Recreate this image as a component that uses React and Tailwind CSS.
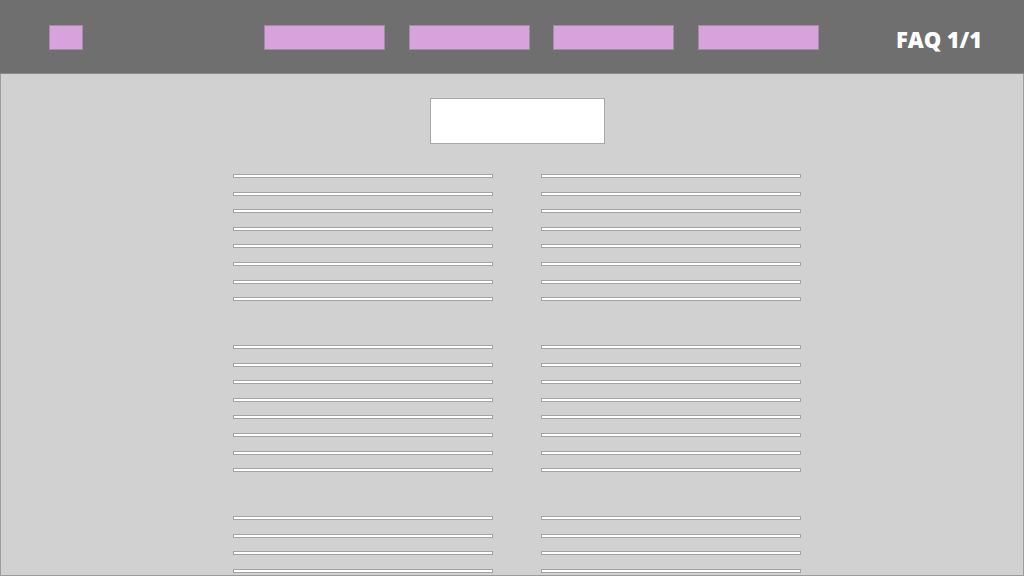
const groups = [8, 8, 4];

function Line() {
  return <div className="h-[4px] w-[260px] border border-[#a3a3a3] bg-white" />;
}

function Column({ count }) {
  return (
    <div className="flex w-[260px] flex-col gap-[13.6px]">
      {Array.from({ length: count }).map((_, i) => (
        <Line key={i} />
      ))}
    </div>
  );
}

export default function App() {
  return (
    <div className="flex h-[576px] w-[1024px] flex-col overflow-hidden bg-[#d1d1d1] font-['Open_Sans',sans-serif]">
      <header className="flex h-[74px] shrink-0 items-start border-b border-[#8a8a8a] bg-[#6f6f6f] pl-[49px] pr-[42px] pt-[25px]">
        <div className="h-[25px] w-[34px] border border-[#a58aa7] bg-[#d8a3dc]" />
        <nav className="ml-[181px] flex gap-[23.5px]">
          <div className="h-[25px] w-[121px] border border-[#a58aa7] bg-[#d8a3dc]" />
          <div className="h-[25px] w-[121px] border border-[#a58aa7] bg-[#d8a3dc]" />
          <div className="h-[25px] w-[121px] border border-[#a58aa7] bg-[#d8a3dc]" />
          <div className="h-[25px] w-[121px] border border-[#a58aa7] bg-[#d8a3dc]" />
        </nav>
        <div className="ml-auto mt-[3px] text-[22px] font-extrabold leading-none tracking-[-0.1px] text-white">FAQ 1/1</div>
      </header>
      <main className="flex flex-1 flex-col border-x border-b border-[#9c9c9c] pl-[232px]">
        <div className="ml-[197px] mt-[24px] h-[46px] w-[175px] border border-[#a8a8a8] bg-white" />
        <div className="mt-[30px] flex flex-col gap-[43.8px]">
          {groups.map((count, g) => (
            <div key={g} className="flex gap-[48px]">
              <Column count={count} />
              <Column count={count} />
            </div>
          ))}
        </div>
      </main>
    </div>
  );
}
